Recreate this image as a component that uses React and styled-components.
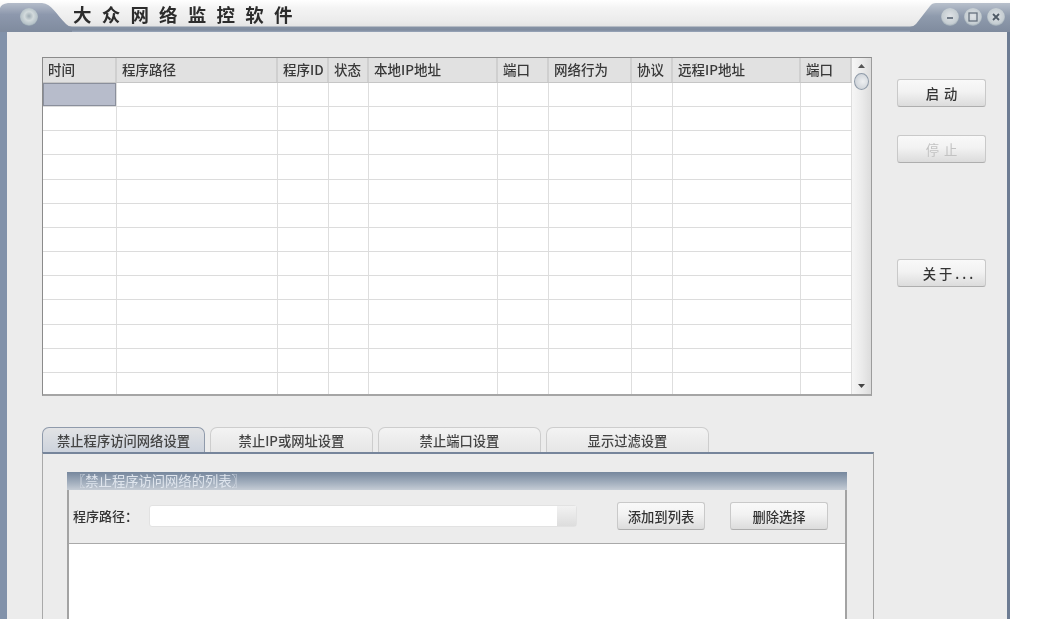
import React from 'react'
import styled, { createGlobalStyle } from 'styled-components'

const GlobalStyle = createGlobalStyle`
  html, body {
    margin: 0;
    height: 619px;
    overflow: hidden;
    background: #fff;
  }
`

const COLUMNS = '74px 161px 51px 40px 129px 51px 83px 41px 128px 51px'
const UI_FONT = '"Noto Sans CJK SC", "Liberation Serif", serif'

const Page = styled.div`
  width: 1010px;
  height: 619px;
  filter: blur(0.55px);
  font-family: ${UI_FONT};
  color: #333;
`

const Window = styled.div`
  height: 100%;
  display: flex;
  flex-direction: column;
  box-sizing: border-box;
`

const TitleBar = styled.div`
  height: 32px;
  flex: none;
  display: flex;
  background: linear-gradient(#fff 0, #f4f4f4 8px, #ececec 20px, #e4e4e4 26px, #8592a4 27px, #7f8b9e 30px, #9aa7bb 32px);
`

const TitleCap = styled.svg`
  flex: none;
  display: block;
`

const TitleText = styled.div`
  flex: 1;
  height: 27px;
  padding-left: 1px;
  font-size: 18.5px;
  font-weight: 700;
  line-height: 29px;
  letter-spacing: 10.2px;
  color: #2c2c2c;
`

const Body = styled.div`
  flex: 1;
  min-height: 0;
  background: #ececec;
  border-left: 7px solid #8292aa;
  border-right: 3px solid #6d7c93;
  padding: 25px 0 0 35px;
`

const TopRow = styled.div`
  display: flex;
  align-items: flex-start;
`

const Grid = styled.div`
  width: 830px;
  height: 339px;
  box-sizing: border-box;
  flex: none;
  display: flex;
  background: #fff;
  border: 1px solid #8b8b8b;
  border-bottom: 2px solid #a5a5a5;
  border-right: 1px solid #9c9c9c;
`

const GridMain = styled.div`
  width: 809px;
  flex: none;
  overflow: hidden;
`

const HeaderRow = styled.div`
  display: grid;
  grid-template-columns: ${COLUMNS};
  height: 24px;
  background: #e1e1e1;
  border-bottom: 1px solid #c6c6c6;
`

const HeaderCell = styled.div`
  padding-left: 5px;
  font-size: 13.5px;
  font-weight: 500;
  line-height: 22px;
  white-space: nowrap;
  color: #383838;
  border-right: 2px solid #cfcfcf;
  overflow: hidden;
`

const DataRow = styled.div`
  display: grid;
  grid-template-columns: ${COLUMNS};
  height: 24.17px;
  box-sizing: border-box;
  border-bottom: 1px solid #dcdcdc;
`

const DataCell = styled.div`
  box-sizing: border-box;
  border-right: 1px solid #dedede;
  background: ${p => (p.$selected ? '#b7bccb' : 'transparent')};
  box-shadow: ${p => (p.$selected ? 'inset 0 0 0 1px #8a8f9c' : 'none')};
`

const ScrollBar = styled.div`
  flex: 1;
  display: flex;
  flex-direction: column;
  align-items: center;
  background: linear-gradient(90deg, #f6f6f6, #eaeaea 55%, #dcdcdc);
`

const ScrollArrow = styled.svg`
  flex: none;
  display: block;
`

const ScrollThumb = styled.div`
  width: 13px;
  height: 15px;
  border-radius: 50%;
  border: 1px solid #8e9aa8;
  background: radial-gradient(circle at 60% 50%, #eef0f2, #c3c9d0);
`

const ScrollSpacer = styled.div`
  flex: 1;
`

const SideButtons = styled.div`
  margin: 22px 0 0 25px;
  display: flex;
  flex-direction: column;
`

const Button = styled.div`
  box-sizing: border-box;
  width: ${p => p.$width || 89}px;
  height: 28px;
  margin-bottom: ${p => p.$after || 0}px;
  padding-left: ${p => p.$indent || 0}px;
  display: flex;
  align-items: center;
  justify-content: center;
  border: 1px solid #c9c9c9;
  border-bottom-color: #aeaeae;
  border-radius: 3px;
  background: linear-gradient(#f9f9f9, #f2f2f2 45%, #dcdcdc);
  font-size: 13.3px;
  font-weight: ${p => (p.$disabled ? 400 : 500)};
  letter-spacing: ${p => p.$spacing || 0}px;
  color: ${p => (p.$disabled ? '#c2c2c2' : '#333')};
  white-space: nowrap;
`

const TabStrip = styled.div`
  margin-top: 31px;
  display: flex;
  gap: 5px;
  height: 25px;
`

const Tab = styled.div`
  box-sizing: border-box;
  width: 163px;
  height: 25px;
  text-align: center;
  font-size: 13.3px;
  font-weight: 500;
  line-height: 25px;
  white-space: nowrap;
  border: 1px solid ${p => (p.$active ? '#8f9aab' : '#cdcdcd')};
  border-bottom: 0;
  border-radius: 7px 7px 0 0;
  background: ${p => (p.$active ? 'linear-gradient(#e2e3e5, #cdd3dd)' : 'linear-gradient(#f3f3f3, #e6e6e6)')};
  color: #444;
`

const TabPanel = styled.div`
  width: 832px;
  box-sizing: border-box;
  border-top: 2px solid #76859b;
  border-left: 1px solid #a9a9a9;
  border-right: 1px solid #a4a4a4;
  padding: 18px 26px 0 24px;
  height: 170px;
`

const Group = styled.div`
  height: 160px;
  box-sizing: border-box;
  border-left: 2px solid #a3a3a3;
  border-right: 2px solid #a3a3a3;
`

const GroupTitle = styled.div`
  height: 18px;
  padding-left: 5px;
  font-size: 13.3px;
  line-height: 18px;
  margin: 0 -2px;
  white-space: nowrap;
  color: #dfe5ed;
  background: linear-gradient(#76879d, #a3afbe 60%, #c5ccd5);
`

const FormRow = styled.div`
  height: 54px;
  box-sizing: border-box;
  padding: 12px 18px 0 4px;
  display: flex;
  align-items: flex-start;
  border-bottom: 1px solid #a9a9a9;
`

const FieldLabel = styled.div`
  width: 76px;
  flex: none;
  font-size: 13px;
  font-weight: 500;
  line-height: 28px;
  color: #333;
  white-space: nowrap;
`

const PathInput = styled.div`
  width: 428px;
  height: 22px;
  margin: 3px 40px 0 0;
  flex: none;
  display: flex;
  justify-content: flex-end;
  box-sizing: border-box;
  background: #fff;
  border: 1px solid #e2e2e2;
  border-radius: 3px;
`

const PathDrop = styled.div`
  width: 19px;
  background: linear-gradient(#f2f2f2, #dddddd);
`

const FormButtons = styled.div`
  display: flex;
  gap: 25px;
`

const ListArea = styled.div`
  height: 90px;
  background: #fff;
`

const headers = ['时间', '程序路径', '程序ID', '状态', '本地IP地址', '端口', '网络行为', '协议', '远程IP地址', '端口']
const tabs = ['禁止程序访问网络设置', '禁止IP或网址设置', '禁止端口设置', '显示过滤设置']

export default function App() {
  const rows = Array.from({ length: 13 })
  return (
    <Page>
      <GlobalStyle />
      <Window>
        <TitleBar>
          <TitleCap width="72" height="32" viewBox="0 0 72 32">
            <defs>
              <linearGradient id="capL" x1="0" y1="0" x2="0" y2="1">
                <stop offset="0" stopColor="#b4bcca" />
                <stop offset="0.4" stopColor="#8d98ad" />
                <stop offset="1" stopColor="#7f8b9e" />
              </linearGradient>
              <radialGradient id="knob" cx="0.5" cy="0.45" r="0.55">
                <stop offset="0" stopColor="#9eabb3" />
                <stop offset="0.45" stopColor="#d2dadc" />
                <stop offset="0.85" stopColor="#b6c2c8" />
                <stop offset="1" stopColor="#8e9eaa" />
              </radialGradient>
            </defs>
            <path d="M0 32V8Q1 4 8 3H42C52 4 56 14 66 24Q69 27 72 27V32Z" fill="url(#capL)" />
            <circle cx="29" cy="17" r="9" fill="url(#knob)" />
          </TitleCap>
          <TitleText>大众网络监控软件</TitleText>
          <TitleCap width="100" height="32" viewBox="0 0 100 32">
            <defs>
              <linearGradient id="capR" x1="0" y1="0" x2="0" y2="1">
                <stop offset="0" stopColor="#b8c0cc" />
                <stop offset="0.45" stopColor="#8f9bad" />
                <stop offset="1" stopColor="#7f8b9e" />
              </linearGradient>
              <radialGradient id="knobR" cx="0.5" cy="0.45" r="0.55">
                <stop offset="0" stopColor="#dfe3e6" />
                <stop offset="0.8" stopColor="#c5cdd2" />
                <stop offset="1" stopColor="#97a5b0" />
              </radialGradient>
            </defs>
            <path d="M0 27Q3 27 6 24L20 6Q22 3 26 3H100V32H0Z" fill="url(#capR)" />
            <circle cx="40" cy="17" r="9" fill="url(#knobR)" />
            <path d="M37 18h6" stroke="#66717e" strokeWidth="1.8" />
            <circle cx="63" cy="17" r="9" fill="url(#knobR)" />
            <rect x="59" y="13" width="8" height="8" fill="none" stroke="#66717e" strokeWidth="1.3" />
            <circle cx="86" cy="17" r="9" fill="url(#knobR)" />
            <path d="M83 14l6 6M89 14l-6 6" stroke="#4f5a66" strokeWidth="1.8" />
          </TitleCap>
        </TitleBar>
        <Body>
          <TopRow>
            <Grid>
              <GridMain>
                <HeaderRow>
                  {headers.map((h, i) => (
                    <HeaderCell key={i}>{h}</HeaderCell>
                  ))}
                </HeaderRow>
                {rows.map((_, r) => (
                  <DataRow key={r}>
                    {headers.map((_, c) => (
                      <DataCell key={c} $selected={r === 0 && c === 0} />
                    ))}
                  </DataRow>
                ))}
              </GridMain>
              <ScrollBar>
                <ScrollArrow width="9" height="15" viewBox="0 0 9 15">
                  <path d="M4.5 6L8 10H1Z" fill="#555" />
                </ScrollArrow>
                <ScrollThumb />
                <ScrollSpacer />
                <ScrollArrow width="9" height="16" viewBox="0 0 9 16">
                  <path d="M1 6H8L4.5 10Z" fill="#444" />
                </ScrollArrow>
              </ScrollBar>
            </Grid>
            <SideButtons>
              <Button $after={28} $spacing={5} $indent={5}>启动</Button>
              <Button $after={96} $spacing={5} $indent={5} $disabled>停止</Button>
              <Button $spacing={3} $indent={16}>关于...</Button>
            </SideButtons>
          </TopRow>
          <TabStrip>
            {tabs.map((t, i) => (
              <Tab key={t} $active={i === 0}>{t}</Tab>
            ))}
          </TabStrip>
          <TabPanel>
            <Group>
              <GroupTitle>〖禁止程序访问网络的列表〗</GroupTitle>
              <FormRow>
                <FieldLabel>程序路径：</FieldLabel>
                <PathInput><PathDrop /></PathInput>
                <FormButtons>
                  <Button $width={88}>添加到列表</Button>
                  <Button $width={98}>删除选择</Button>
                </FormButtons>
              </FormRow>
              <ListArea />
            </Group>
          </TabPanel>
        </Body>
      </Window>
    </Page>
  )
}
